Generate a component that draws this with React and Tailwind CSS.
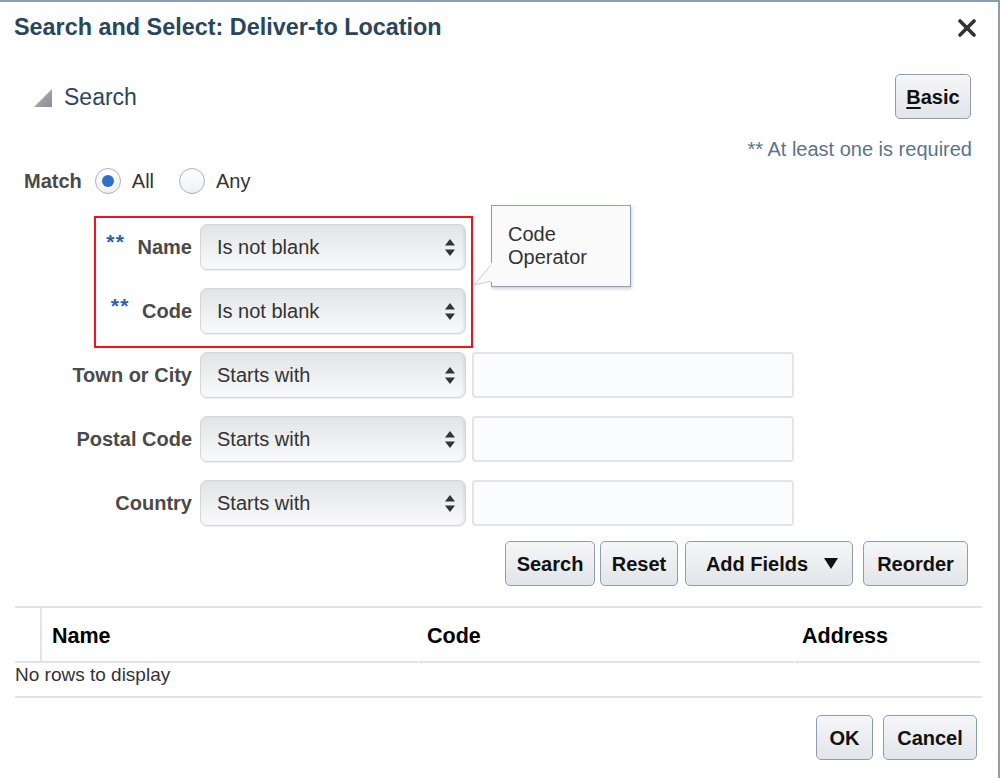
import React from "react";

const btn =
  "flex items-center justify-center h-[45px] rounded-[5px] border border-[#8e9db0] bg-linear-to-b from-[#f5f6f8] to-[#e2e5e9] text-[20px] font-bold text-[#111] leading-none";

function Arrows() {
  return (
    <svg width="10" height="17" viewBox="0 0 10 17" className="shrink-0">
      <polygon points="0,6.5 10,6.5 5,0" fill="#333" />
      <polygon points="0,10.5 10,10.5 5,17" fill="#333" />
    </svg>
  );
}

function Select({ value }) {
  return (
    <div className="ml-[8px] w-[266px] h-[46px] rounded-[7px] border border-[#d4d6da] bg-linear-to-b from-[#e3e4e6] via-[#eeeff0] to-[#f9f9fa] shadow-[inset_-2px_0_2px_rgba(0,0,0,0.06),0_1px_1px_rgba(0,0,0,0.06)] flex items-center justify-between pl-[16px] pr-[10px]">
      <span className="text-[20px] text-[#333] leading-none pb-[1px]">{value}</span>
      <Arrows />
    </div>
  );
}

function Radio({ checked }) {
  return (
    <div className="w-[26px] h-[26px] rounded-full border border-[#aab1b9] bg-linear-to-b from-white to-[#eef0f2] flex items-center justify-center shrink-0">
      {checked && <div className="w-[12px] h-[12px] rounded-full bg-[#2d6fcb]" />}
    </div>
  );
}

function Row({ label, req, op, input }) {
  return (
    <div className="flex items-center h-[46px]">
      <div className="w-[192px] flex justify-end items-center gap-[12px]">
        {req && (
          <span className="text-[21px] font-bold text-[#2a5fae] tracking-[1.5px] leading-none -mt-[12px]">
            **
          </span>
        )}
        <span className="text-[20px] font-bold text-[#4a4a4a] leading-none">{label}</span>
      </div>
      <Select value={op} />
      {input && (
        <div className="ml-[6px] w-[322px] h-[46px] rounded-[4px] border-2 border-[#e1e4e8] bg-[#fbfcfd]" />
      )}
    </div>
  );
}

export default function App() {
  return (
    <div className="relative w-[1000px] h-[778px] bg-white border-t-2 border-r-2 border-[#8d9db1] overflow-hidden font-['Liberation_Sans',Arial,sans-serif]">
      {/* Header */}
      <div className="h-[52px] flex items-center justify-between pl-[14px] pr-[22px]">
        <h1 className="text-[23.4px] font-bold text-[#29465b] leading-none">
          Search and Select: Deliver-to Location
        </h1>
        <svg width="18" height="18" viewBox="0 0 18 18">
          <line x1="2" y1="2" x2="16" y2="16" stroke="#333" strokeWidth="3.6" strokeLinecap="round" />
          <line x1="16" y1="2" x2="2" y2="16" stroke="#333" strokeWidth="3.6" strokeLinecap="round" />
        </svg>
      </div>

      {/* Search section header */}
      <div className="mt-[20px] h-[45px] flex items-center justify-between pl-[34px] pr-[27px]">
        <div className="flex items-center gap-[12px]">
          <svg width="18" height="18" viewBox="0 0 18 18" className="mt-[2px]">
            <defs>
              <linearGradient id="tri" x1="0" y1="0" x2="1" y2="1">
                <stop offset="0" stopColor="#b4b7bb" />
                <stop offset="1" stopColor="#8a8d92" />
              </linearGradient>
            </defs>
            <polygon points="18,0 18,18 0,18" fill="url(#tri)" />
          </svg>
          <span className="text-[23px] text-[#2b475c] leading-none mt-[2px]">Search</span>
        </div>
        <button className={btn + " w-[76px]"}>
          <span className="underline underline-offset-[3px] decoration-[2px]">B</span>asic
        </button>
      </div>

      {/* Required note */}
      <div className="mt-[20px] h-[20px] text-right pr-[26px] text-[20px] leading-[20px] text-[#5b7488]">
        ** At least one is required
      </div>

      {/* Match */}
      <div className="mt-[9px] h-[26px] flex items-center pl-[24px]">
        <span className="text-[20px] font-bold text-[#4a4a4a] leading-none mr-[13px]">Match</span>
        <Radio checked />
        <span className="ml-[11px] text-[20px] text-[#333] leading-none">All</span>
        <div className="ml-[25px]">
          <Radio />
        </div>
        <span className="ml-[11px] text-[20px] text-[#333] leading-none">Any</span>
      </div>

      {/* Fields */}
      <div className="relative mt-[30px] flex flex-col gap-[18px]">
        <Row label="Name" req op="Is not blank" />
        <Row label="Code" req op="Is not blank" />
        <Row label="Town or City" op="Starts with" input />
        <Row label="Postal Code" op="Starts with" input />
        <Row label="Country" op="Starts with" input />
        <div className="absolute left-[94px] top-[-8px] w-[379px] h-[132px] border-2 border-[#f2121a] pointer-events-none" />
      </div>

      {/* Action buttons */}
      <div className="mt-[15px] flex justify-end pr-[30px]">
        <button className={btn + " w-[90px]"}>Search</button>
        <button className={btn + " w-[78px] ml-[5px]"}>Reset</button>
        <button className={btn + " w-[168px] ml-[7px] gap-[16px] pl-[6px]"}>
          <span>Add Fields</span>
          <svg width="14" height="11" viewBox="0 0 14 11">
            <polygon points="0,0 14,0 7,11" fill="#111" />
          </svg>
        </button>
        <button className={btn + " w-[105px] ml-[10px]"}>Reorder</button>
      </div>

      {/* Table */}
      <div className="mt-[20px] ml-[15px] w-[967px] border-t-2 border-[#e0e4e8]">
        <div className="flex h-[55px]">
          <div className="w-[27px] border-r-2 border-b-2 border-[#e0e4e8]" />
          <div className="w-[376px] border-b-2 border-[#e0e4e8] flex items-center pl-[10px] pt-[3px] text-[21.5px] font-bold text-black">
            Name
          </div>
          <div className="w-[375px] ml-[1px] border-b-2 border-[#e0e4e8] flex items-center pl-[8px] pt-[3px] text-[21.5px] font-bold text-black">
            Code
          </div>
          <div className="w-[185px] ml-[1px] border-b-2 border-[#e0e4e8] flex items-center pl-[7px] pt-[3px] text-[21.5px] font-bold text-black">
            Address
          </div>
        </div>
        <div className="h-[35px] border-b-2 border-[#e0e4e8] text-[19px] text-[#333] leading-[22px] pt-[1px]">
          No rows to display
        </div>
      </div>

      {/* Footer */}
      <div className="mt-[17px] flex justify-end gap-[10px] pr-[21px]">
        <button className={btn + " w-[57px]"}>OK</button>
        <button className={btn + " w-[94px]"}>Cancel</button>
      </div>

      {/* Tooltip */}
      <div className="absolute left-[491px] top-[203px] w-[140px] h-[82px] bg-[#fafafa] border border-[#8fa0b4] shadow-[1px_2px_3px_rgba(0,0,0,0.18)] pl-[16px] pt-[17px] text-[20px] leading-[23px] text-[#333]">
        Code
        <br />
        Operator
      </div>
      <svg
        className="absolute left-[470px] top-[256px]"
        width="23"
        height="32"
        viewBox="0 0 23 32"
      >
        <polygon points="22,6 4,27 22,23" fill="#fafafa" stroke="#c3ccd6" strokeWidth="1" />
        <line x1="22" y1="5" x2="22" y2="24" stroke="#fafafa" strokeWidth="2" />
      </svg>
    </div>
  );
}
